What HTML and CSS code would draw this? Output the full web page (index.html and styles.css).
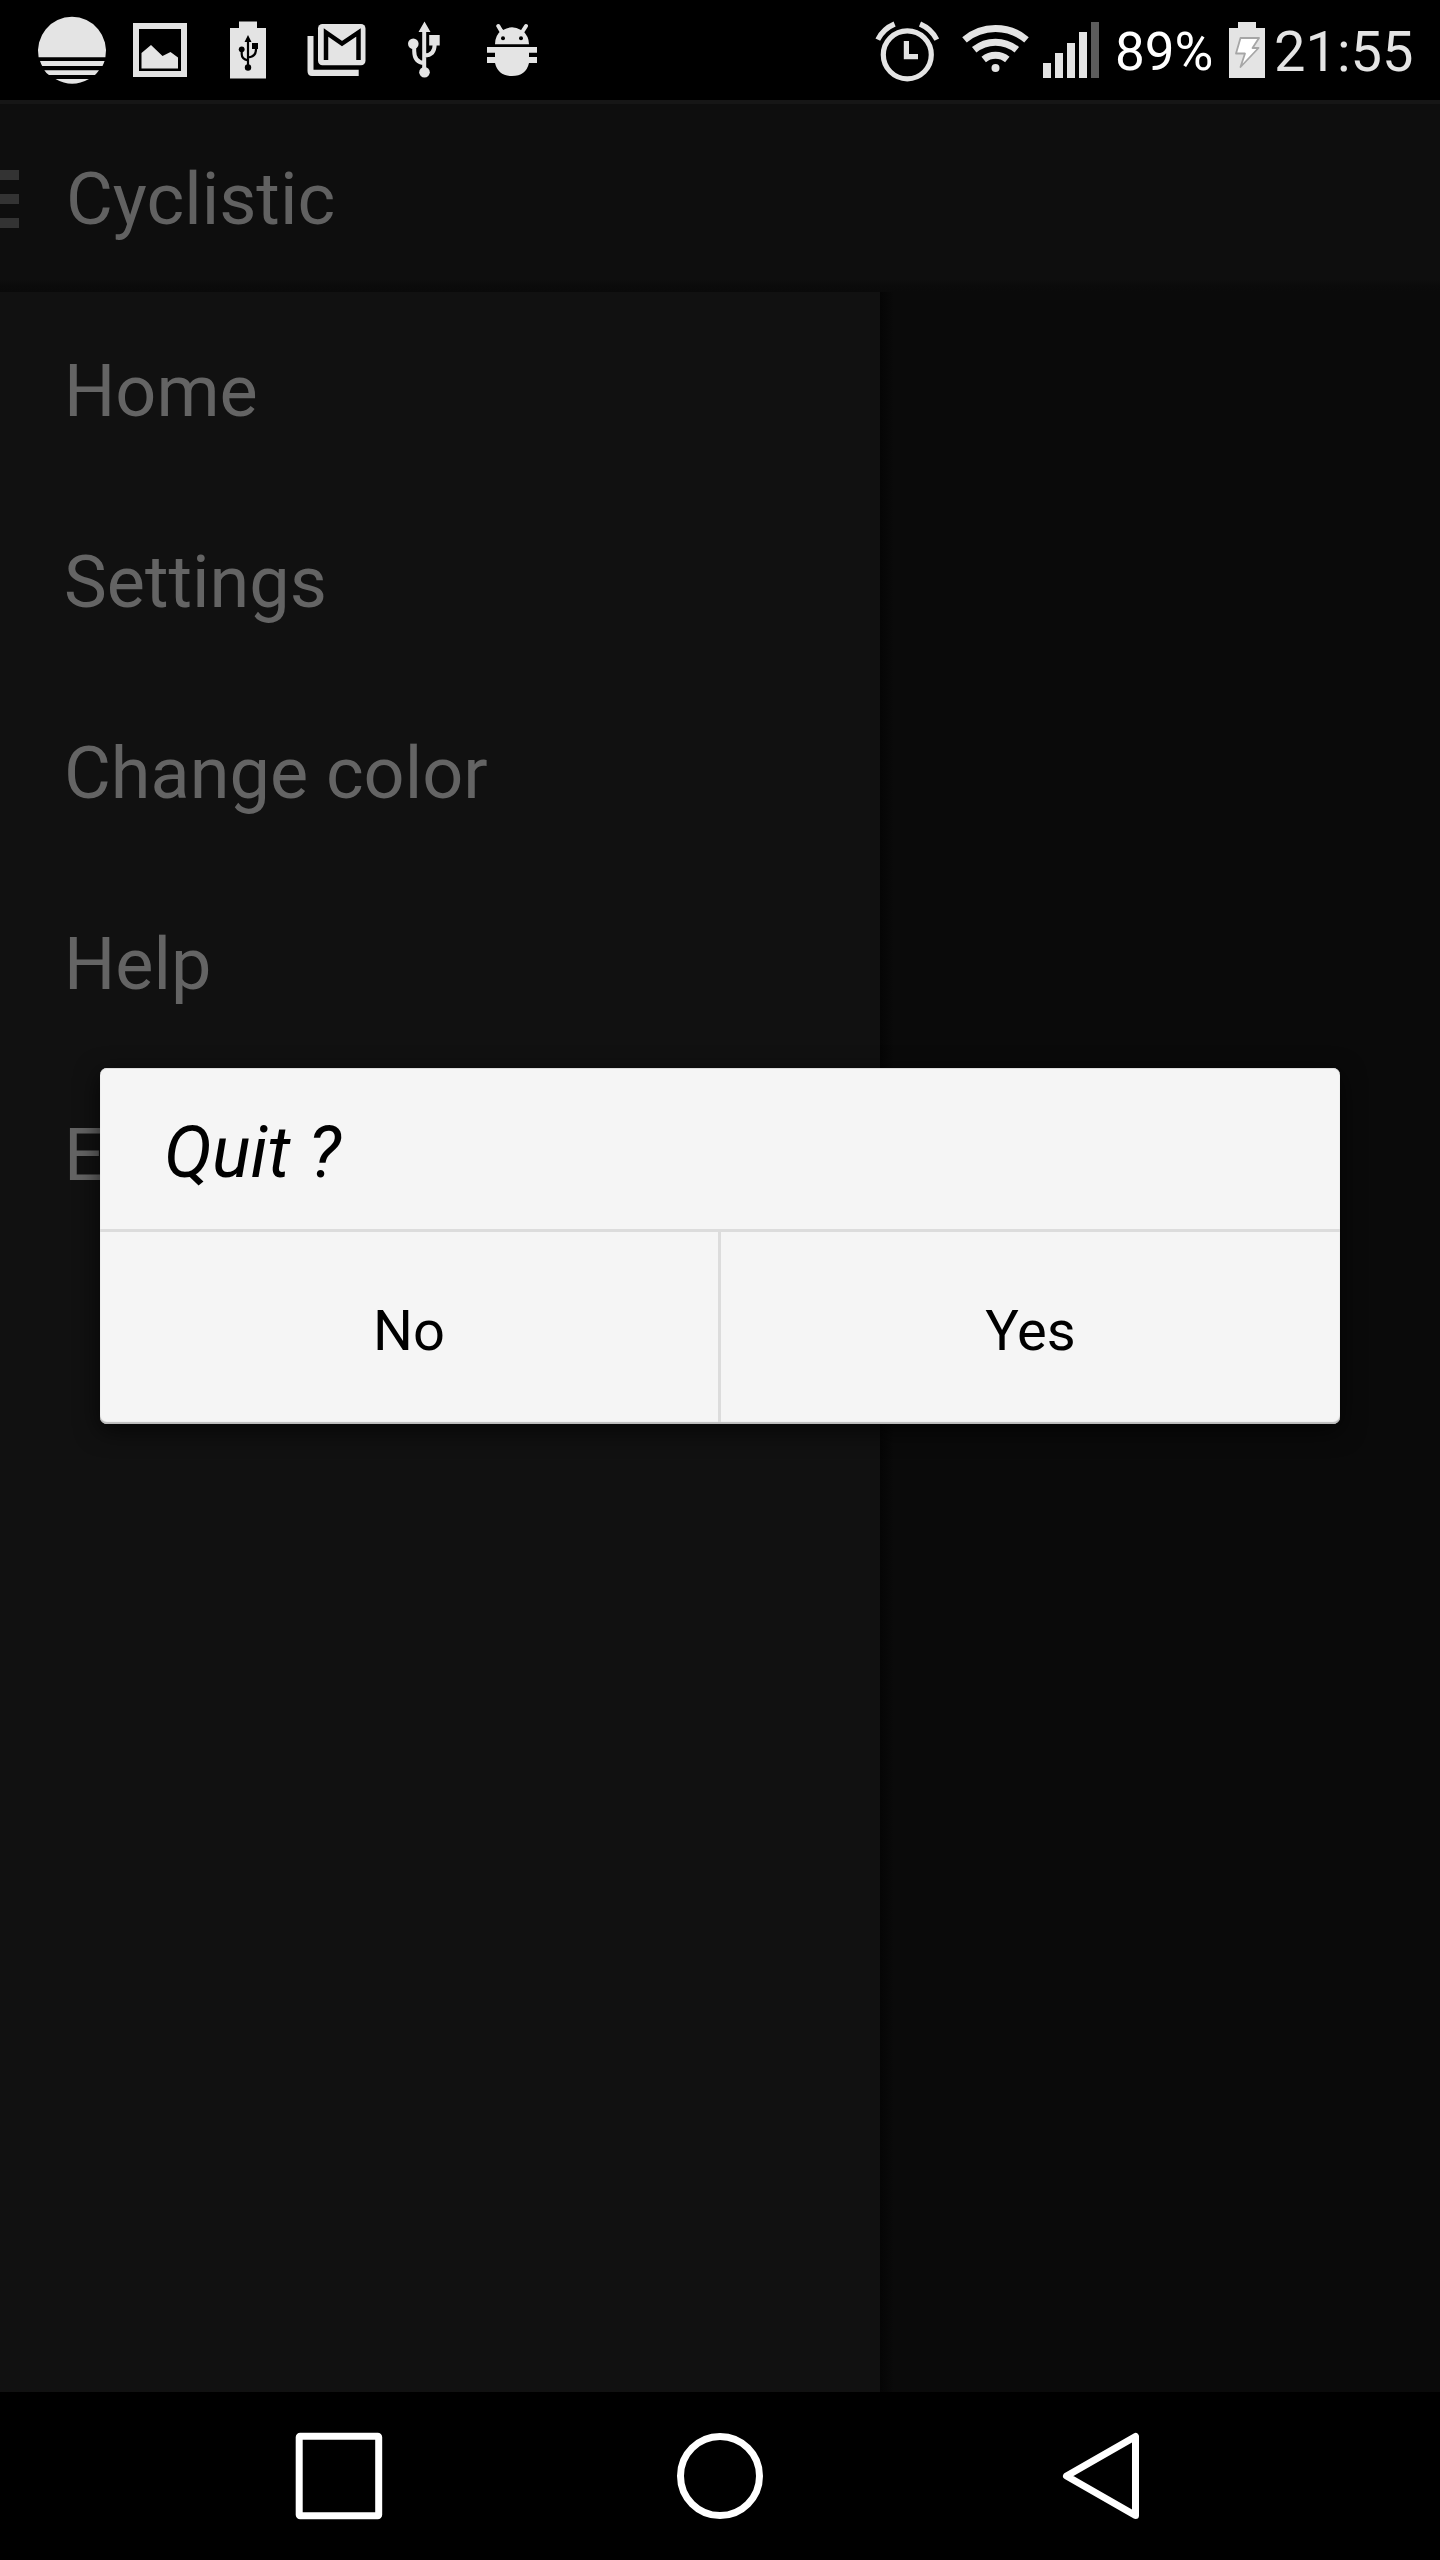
FILE: index.html
```html
<!DOCTYPE html>
<html lang="en">
<head>
<meta charset="utf-8">
<title>Cyclistic</title>
<link rel="stylesheet" href="styles.css">
</head>
<body>
<div class="screen">
  <header class="status">
    <div class="status-group">
      <svg class="icon" width="120" height="100" viewBox="0 0 120 100"><path d="M38.6 57.2A34 34 0 1 1 105.400 57.2ZM40 61H104.600Q103.500 64 102.500 66H42.200Q41 64 40 61ZM44.300 70.200H99Q97 73 95 75H49Q46 73 44.300 70.200ZM55.500 79H89Q72 88.500 55.500 79Z"/></svg>
      <svg class="icon" width="80" height="100" viewBox="120 0 80 100"><path fill-rule="evenodd" d="M133 23H187V77H133ZM139 29V71H181V29Z"/><path d="M141.500 53L151 45L162.500 56L170.500 52L178 57.500V68.500H141.500Z"/></svg>
      <svg class="icon" width="90" height="100" viewBox="200 0 90 100"><path d="M239 21.500H257V28H266V78.500H230V28H239Z"/><g class="cut"><path d="M248 35L251.500 42H244.500ZM252 43H258V49H252Z"/><circle cx="241.700" cy="49.300" r="2.900"/><circle cx="248" cy="67.500" r="3.200"/><path class="cut-line" d="M248 40V67M241.700 49V54Q241.700 59 248 60.500M256 48Q256.500 57 248 57.500"/></g></svg>
      <svg class="icon" width="100" height="100" viewBox="290 0 100 100"><path d="M307.500 36H313.500V69.700H358.700V76H312Q307.500 76 307.500 71Z"/><rect x="318" y="24" width="47.500" height="41.200" rx="4.500"/><path class="mail-cut" d="M326 60V32.500L342 43.500L358.500 32.500V60"/></svg>
      <svg class="icon" width="80" height="100" viewBox="390 0 80 100"><path d="M424.500 21.500L430.500 32H418.500ZM429.200 35H439.700V45.500H429.200Z"/><circle cx="413.300" cy="43.800" r="5.300"/><circle cx="424.500" cy="72.200" r="5.300"/><path class="line4" d="M424.200 30V72M414.200 45V51Q414.200 62.500 424.500 63.200M434.700 44Q434.700 55.500 424.500 55.500"/></svg>
      <svg class="icon" width="90" height="100" viewBox="470 0 90 100"><path d="M495 44.300Q495 35 502 30L496.500 26.500L498.500 25L503 30Q512 24.500 521 30H522Q529 36 529 44.300ZM487 47H537V52.800H529V57H537V63H529Q526 76 512 76Q498 76 495 63H487V57H495V52.800H487Z"/><path class="line4" d="M498.300 26L501.500 31.500M526 26L522.500 31.500" stroke-linecap="round"/><g class="cut"><circle cx="503" cy="38.300" r="2"/><circle cx="521" cy="38.300" r="2"/></g></svg>
    </div>
    <div class="status-group">
      <svg class="icon" width="90" height="100" viewBox="860 0 90 100"><circle class="line5" cx="907.300" cy="54.800" r="24"/><path d="M903.800 41H909V54H918V59.200H903.800Z"/><path class="line5" d="M877.800 39.600Q883 29 894.600 24M936.800 39.600Q931.500 29 920 24"/></svg>
      <svg class="icon" width="85" height="100" viewBox="950 0 85 100"><path class="arc" d="M964.500 39.800A48 48 0 0 1 1026.500 39.800M974.200 49.800A33.500 33.500 0 0 1 1016.800 49.800M983.700 59.500A18.500 18.500 0 0 1 1007.300 59.500"/><circle cx="995.500" cy="68" r="4"/></svg>
      <svg class="icon" width="75" height="100" viewBox="1035 0 75 100"><path d="M1043 63H1051V78H1043ZM1055 53H1063V78H1055ZM1067 43H1075V78H1067ZM1079 32H1087V78H1079Z"/><path class="dim" d="M1091 22H1099V78H1091Z"/></svg>
      <span class="percent">89%</span>
      <svg class="icon" width="45" height="100" viewBox="1225 0 45 100"><path d="M1238 22H1256V28H1265V78H1229V28H1238Z"/><path class="bolt" d="M1240.500 38H1259L1252.500 48H1258.500L1240.500 67L1245 53.500H1236Z"/></svg>
      <span class="clock">21:55</span>
    </div>
  </header>
  <div class="appbar">
    <svg class="menu-icon" width="20" height="60" viewBox="0 0 20 60"><path d="M0 0H19V10H0ZM0 24H19V34H0ZM0 48H19V58H0Z"/></svg>
    <h1 class="title">Cyclistic</h1>
  </div>
  <main class="body">
    <ul class="drawer">
      <li class="item">Home</li>
      <li class="item">Settings</li>
      <li class="item">Change color</li>
      <li class="item">Help</li>
      <li class="item">Exit</li>
    </ul>
    <div class="content"></div>
  </main>
  <nav class="navbar">
    <svg width="1440" height="168" viewBox="0 2392 1440 168"><rect x="299.200" y="2436.200" width="79.500" height="79.500" rx="1"/><circle cx="720" cy="2476" r="39.500"/><path d="M1135.500 2436.500V2515.500L1066.500 2476Z"/></svg>
  </nav>
  <section class="dialog">
    <h2 class="dialog-title">Quit ?</h2>
    <div class="actions"><button class="action">No</button><button class="action">Yes</button></div>
  </section>
</div>
</body>
</html>
```
FILE: styles.css
```css
* { box-sizing: border-box; }
body { margin: 0; background: #000; font-family: Roboto, sans-serif; }
.screen { position: relative; display: flex; flex-direction: column; width: 1440px; height: 2560px; overflow: hidden; }
.status { display: flex; justify-content: space-between; height: 100px; flex: none; background: #000; }
.status-group { display: flex; align-items: flex-start; }
.icon { display: block; flex: none; fill: #e4e4e4; }
.cut { fill: #000; }
.cut-line { fill: none; stroke: #000; stroke-width: 2.2; }
.mail-cut { fill: none; stroke: #000; stroke-width: 4.500; }
.line4 { fill: none; stroke: #e4e4e4; stroke-width: 4; }
.line5 { fill: none; stroke: #e4e4e4; stroke-width: 5.200; }
.arc { fill: none; stroke: #e4e4e4; stroke-width: 7; }
.dim { fill: #5c5c5c; }
.bolt { fill: #fff; stroke: #a6a6a6; stroke-width: 1.800; stroke-linejoin: round; }
.percent { width: 115px; padding: 20px 0 0 5px; font-size: 53px; line-height: 64px; color: #fff; }
.clock { width: 170px; padding: 19px 0 0 4px; font-size: 56px; line-height: 66px; color: #e4e4e4; }
.appbar { display: flex; align-items: flex-start; flex: none; height: 192px; border-top: 4px solid #161616; background: linear-gradient(#0e0e0e 175px, #0b0b0b 181px, #0a0a0a 188px); }
.menu-icon { margin-top: 66px; fill: #333; }
.title { margin: 54px 0 0 46px; font-size: 72px; line-height: 84px; font-weight: 400; color: #616161; }
.body { display: flex; flex: 1; }
.drawer { width: 880px; margin: 0; padding: 4px 0 0; list-style: none; background: #111; }
.item { height: 191px; padding-left: 64px; font-size: 72px; line-height: 192px; color: #646464; }
.content { flex: 1; background: linear-gradient(90deg, #050505, #0a0a0a 14px); }
.navbar { flex: none; height: 168px; background: #000; }
.navbar svg { display: block; fill: none; stroke: #fff; stroke-width: 7; stroke-linejoin: round; }
.dialog { position: absolute; left: 100px; top: 1068px; width: 1240px; height: 356px; overflow: hidden; border-radius: 7px; background: #f5f5f5; box-shadow: 0 6px 24px rgba(0,0,0,.7), inset 0 -2px 1px #bbb, inset 0 1px 0 #ddd; color: #000; }
.dialog-title { height: 164px; margin: 0; padding: 43px 0 0 64px; border-bottom: 3px solid #dcdcdc; font-size: 72px; line-height: 84px; font-weight: 400; font-style: italic; }
.actions { display: grid; grid-template-columns: 618px 1fr; height: 190px; }
.action { margin: 0; padding: 8px 0 0; border: 0; background: none; font: 56px/66px Roboto, sans-serif; color: #000; }
.action + .action { border-left: 3px solid #dcdcdc; }
```
